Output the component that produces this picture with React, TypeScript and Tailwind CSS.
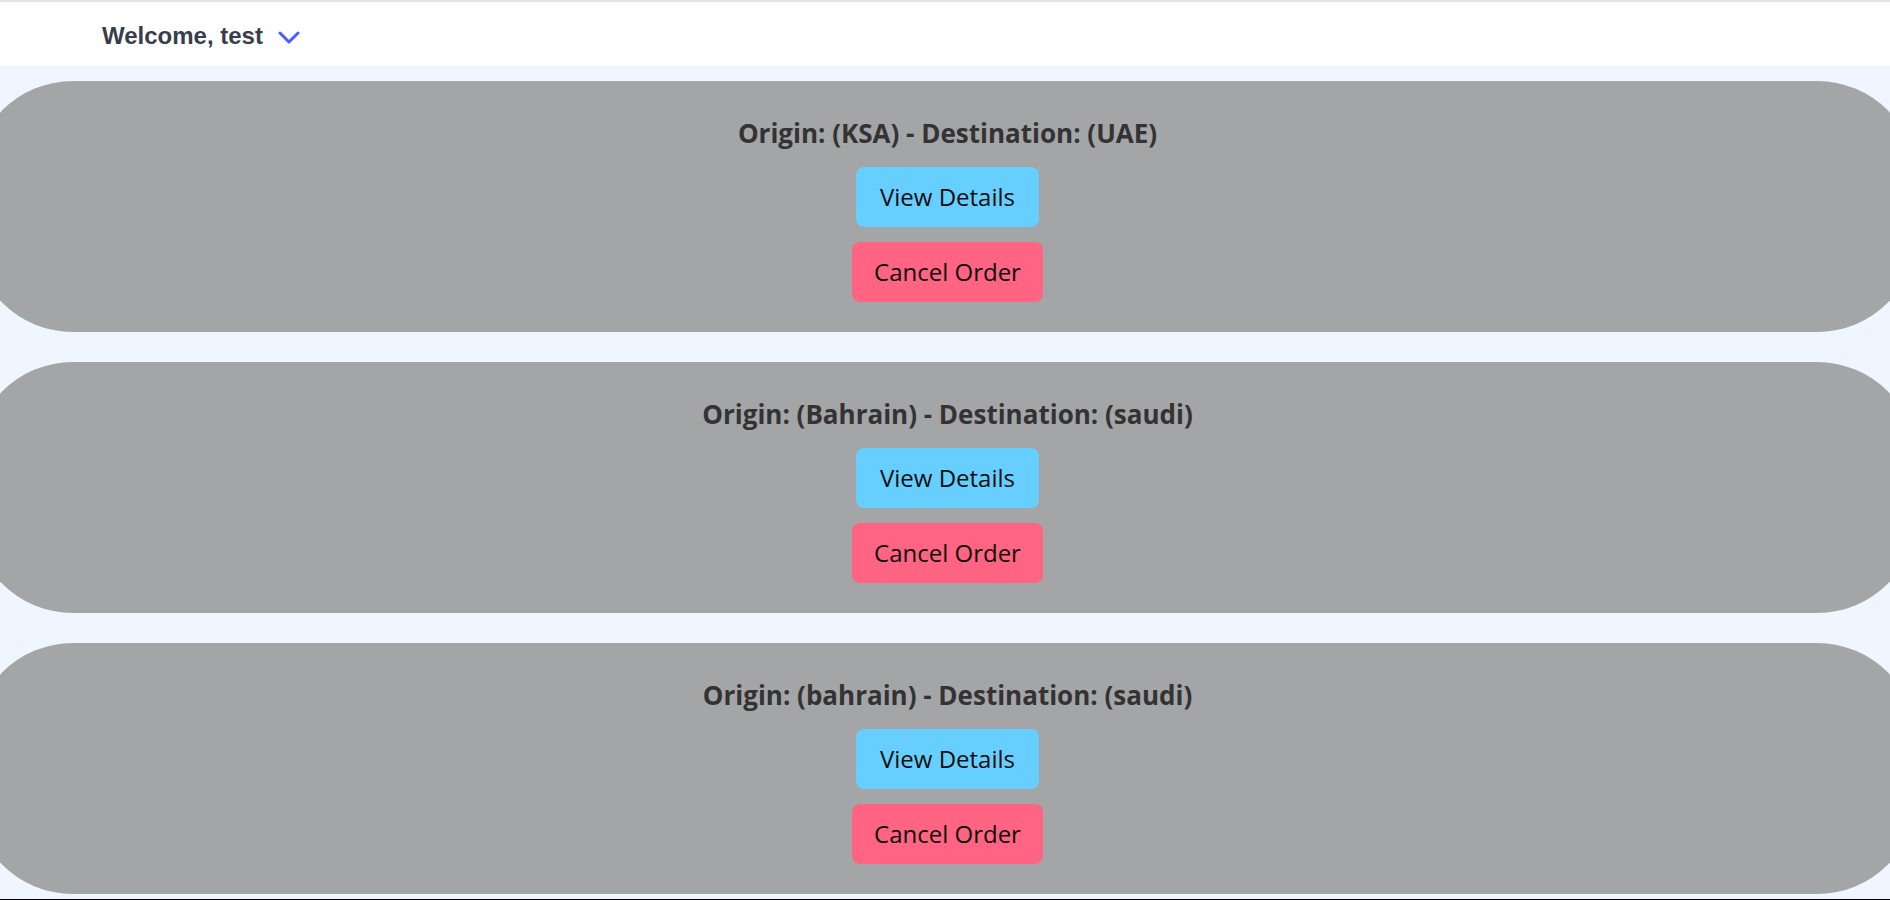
const orders = [
  { origin: 'KSA', destination: 'UAE' },
  { origin: 'Bahrain', destination: 'saudi' },
  { origin: 'bahrain', destination: 'saudi' },
]

function OrderCard({ origin, destination }: { origin: string; destination: string }) {
  return (
    <div className="-mx-[27px] flex flex-col items-center rounded-[100px] bg-[#a4a5a7] pt-[36px] pb-[30px] pl-[5px]">
      <h2 className="text-[26px] leading-[32px] font-bold text-[#333333]">
        Origin: ({origin}) - Destination: ({destination})
      </h2>
      <button className="mt-[18px] h-[60px] rounded-[8px] bg-[#66cfff] px-[24px] text-[24px] text-[#0d0d0d]">
        View Details
      </button>
      <button className="mt-[15px] h-[60px] rounded-[8px] bg-[#ff6482] px-[22px] text-[24px] text-[#0d0d0d]">
        Cancel Order
      </button>
    </div>
  )
}

export default function App() {
  return (
    <div className="flex h-screen flex-col overflow-hidden border-b border-black bg-[#eff6ff] font-['Open_Sans',sans-serif]">
      <header className="flex h-[66px] shrink-0 items-center border-t-2 border-[#e3e3e3] bg-white pl-[102px]">
        <span className="pt-[4px] font-['Liberation_Sans',Arial,sans-serif] text-[24px] leading-none font-bold text-[#383d4a]">
          Welcome, test
        </span>
        <svg className="ml-[15px] mt-[8px]" width="22" height="14" viewBox="0 0 22 14" fill="none">
          <polyline points="2,2 11,11 20,2" stroke="#4c5cff" strokeWidth="3" strokeLinecap="round" strokeLinejoin="round" />
        </svg>
      </header>
      <main className="flex flex-col gap-[30px] pt-[15px]">
        {orders.map((o, i) => (
          <OrderCard key={i} origin={o.origin} destination={o.destination} />
        ))}
      </main>
    </div>
  )
}
